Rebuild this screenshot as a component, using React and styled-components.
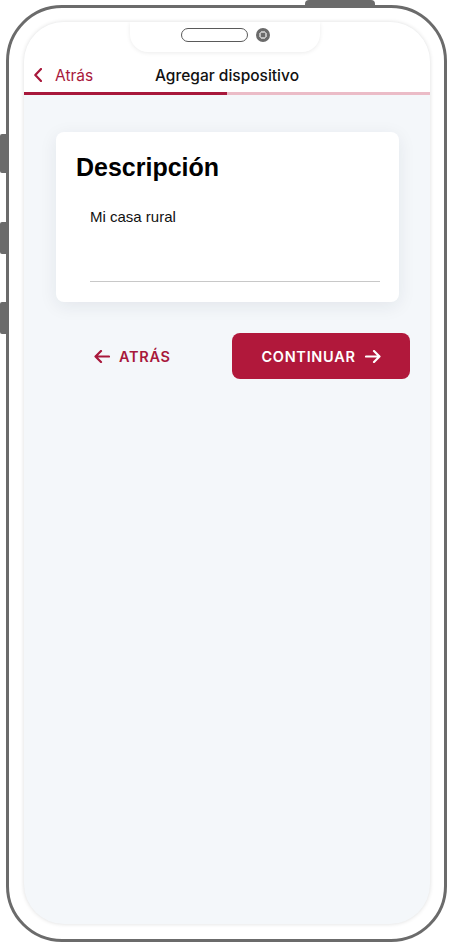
import React from 'react';
import styled, { createGlobalStyle } from 'styled-components';

const RED = '#a8183b';
const RED_BUTTON = '#b1183b';

const GlobalStyle = createGlobalStyle`
  html, body {
    margin: 0;
    padding: 0;
    background: #ffffff;
  }
  body {
    font-family: Inter, 'Liberation Sans', sans-serif;
    -webkit-font-smoothing: antialiased;
  }
  * {
    box-sizing: border-box;
  }
`;

const Page = styled.div`
  width: 450px;
  height: 944px;
  overflow: hidden;
  padding: 5px 0 0 6px;
`;

const Phone = styled.div`
  position: relative;
  width: 441px;
  height: 937px;
  border: 3px solid #6b6b6b;
  border-radius: 56px;
  padding: 14px 0 0 15px;
  background: #ffffff;
`;

const SideKey = styled.div`
  position: absolute;
  left: -9px;
  top: ${({ top }) => top}px;
  width: 7px;
  height: ${({ size }) => size}px;
  background: #6b6b6b;
  border-radius: 2px 0 0 2px;
`;

const TopKey = styled.div`
  position: absolute;
  top: -8px;
  left: 296px;
  width: 70px;
  height: 6px;
  background: #6b6b6b;
  border-radius: 4px 4px 0 0;
`;

const Screen = styled.div`
  position: relative;
  width: 406px;
  height: 902px;
  border-radius: 40px;
  overflow: hidden;
  background: #f4f7fa;
  box-shadow: 0 0 4px rgba(0, 0, 0, 0.14);
  display: flex;
  flex-direction: column;
`;

const Notch = styled.div`
  position: absolute;
  top: 0;
  left: 106px;
  width: 190px;
  height: 30px;
  background: #ffffff;
  border-radius: 0 0 18px 18px;
  box-shadow: 0 1px 4px rgba(0, 0, 0, 0.08);
  display: flex;
  justify-content: center;
  align-items: flex-start;
  gap: 8px;
  padding-top: 6px;
`;

const Speaker = styled.div`
  width: 67px;
  height: 14px;
  border: 1.5px solid #5a5a5a;
  border-radius: 7px;
`;

const Camera = styled.div`
  width: 14px;
  height: 14px;
  border-radius: 50%;
  background: radial-gradient(circle, #6a6a6a 0 2.5px, #bdbdbd 2.5px 4px, #6a6a6a 4px);
`;

const Header = styled.header`
  height: 70px;
  padding-top: 36px;
  background: #ffffff;
  display: grid;
  grid-template-columns: 1fr auto 1fr;
  align-items: center;
`;

const BackLink = styled.a`
  display: flex;
  align-items: center;
  gap: 13px;
  padding-left: 10px;
  color: ${RED};
  font-size: 15.5px;
  text-decoration: none;
`;

const Title = styled.h1`
  margin: 0;
  font-size: 15.5px;
  font-weight: 500;
  color: #111111;
`;

const Progress = styled.div`
  height: 3px;
  background: #ebbcc7;
`;

const ProgressFill = styled.div`
  height: 100%;
  background: ${RED};
`;

const Content = styled.main`
  padding: 37px 20px 0 32px;
  display: flex;
  flex-direction: column;
`;

const Card = styled.section`
  width: 343px;
  background: #ffffff;
  border-radius: 8px;
  box-shadow: 0 4px 18px rgba(30, 40, 60, 0.08);
  padding: 20px 19px 20px 20px;
`;

const CardTitle = styled.h2`
  margin: 0;
  font-family: 'Liberation Sans', Arial, sans-serif;
  font-size: 25px;
  line-height: 30px;
  font-weight: 700;
  color: #000000;
`;

const Field = styled.textarea`
  display: block;
  width: 290px;
  height: 75px;
  margin: 25px 0 0 14px;
  padding: 0;
  border: none;
  border-bottom: 1px solid #c8c8c8;
  background: transparent;
  resize: none;
  outline: none;
  font-family: 'Liberation Sans', Arial, sans-serif;
  font-size: 15px;
  line-height: 20px;
  color: #111111;
`;

const Actions = styled.div`
  margin-top: 31px;
  margin-left: 26px;
  display: flex;
  align-items: center;
  justify-content: space-between;
`;

const ActionButton = styled.button`
  display: flex;
  align-items: center;
  justify-content: center;
  gap: 9px;
  height: 46px;
  padding: ${({ primary }) => (primary ? '0' : '0 12px')};
  width: ${({ primary }) => (primary ? '178px' : 'auto')};
  border: none;
  border-radius: 8px;
  background: ${({ primary }) => (primary ? RED_BUTTON : 'transparent')};
  color: ${({ primary }) => (primary ? '#ffffff' : RED)};
  font-family: Inter, 'Liberation Sans', sans-serif;
  font-size: 14.5px;
  font-weight: 600;
  letter-spacing: 0.7px;
  cursor: pointer;
`;

const Chevron = () => (
  <svg width="8" height="14" viewBox="0 0 8 14" fill="none">
    <path d="M7 1L1.3 7L7 13" stroke={RED} strokeWidth="2.2" strokeLinecap="round" strokeLinejoin="round" />
  </svg>
);

const Arrow = ({ left, color }) => (
  <svg width="16" height="13" viewBox="0 0 16 13" fill="none" style={{ transform: left ? 'scaleX(-1)' : 'none' }}>
    <path d="M1 6.5H14.5M9 1L14.5 6.5L9 12" stroke={color} strokeWidth="2.2" strokeLinecap="round" strokeLinejoin="round" />
  </svg>
);

export default function App() {
  const step = 0.5;
  return (
    <Page>
      <GlobalStyle />
      <Phone>
        <TopKey />
        <SideKey top={126} size={39} />
        <SideKey top={214} size={32} />
        <SideKey top={294} size={32} />
        <Screen>
          <Notch>
            <Speaker />
            <Camera />
          </Notch>
          <Header>
            <BackLink href="#">
              <Chevron />
              Atrás
            </BackLink>
            <Title>Agregar dispositivo</Title>
            <span />
          </Header>
          <Progress>
            <ProgressFill style={{ width: `${step * 100}%` }} />
          </Progress>
          <Content>
            <Card>
              <CardTitle>Descripción</CardTitle>
              <Field defaultValue="Mi casa rural" />
            </Card>
            <Actions>
              <ActionButton>
                <Arrow left color={RED} />
                ATRÁS
              </ActionButton>
              <ActionButton primary>
                CONTINUAR
                <Arrow color="#ffffff" />
              </ActionButton>
            </Actions>
          </Content>
        </Screen>
      </Phone>
    </Page>
  );
}
